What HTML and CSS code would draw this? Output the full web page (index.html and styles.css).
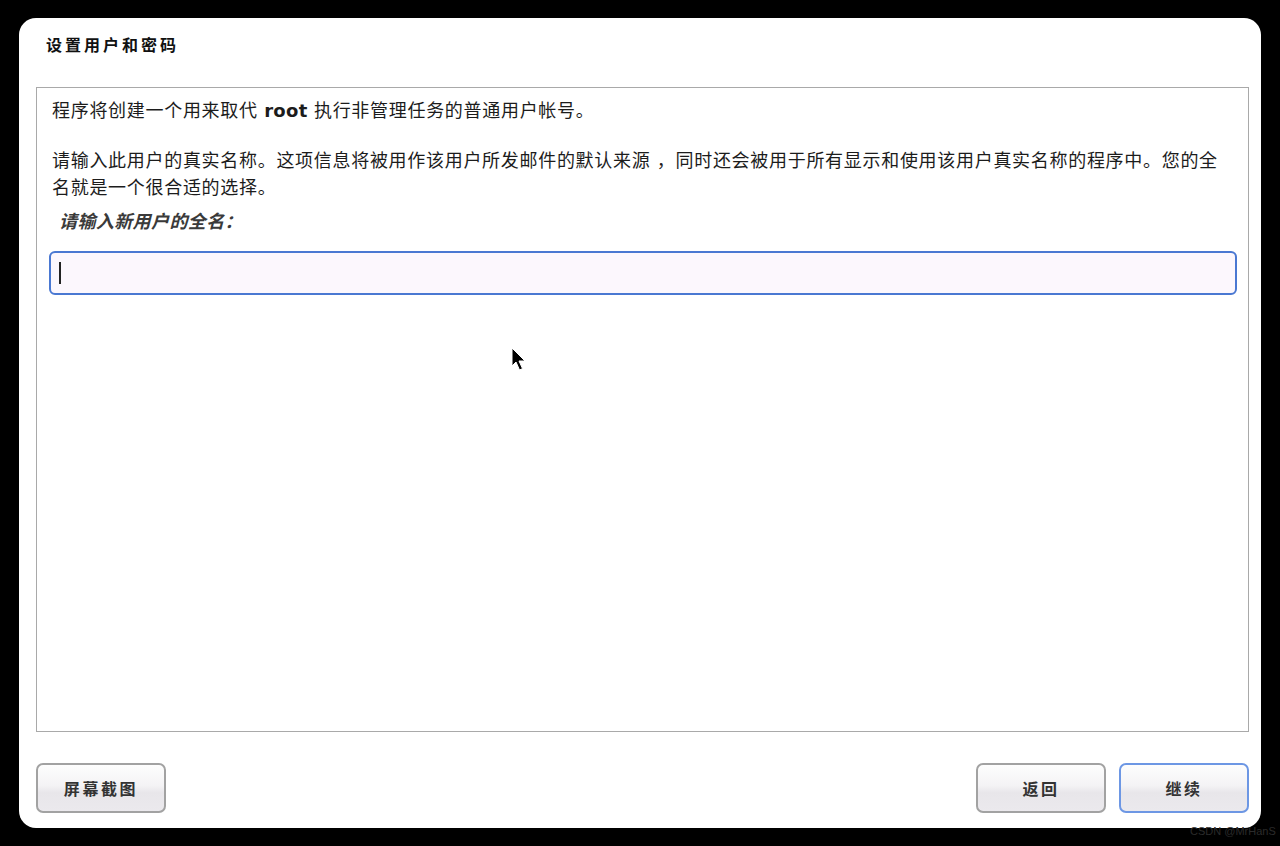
FILE: index.html
```html
<!DOCTYPE html>
<html lang="zh-CN">
<head>
<meta charset="utf-8">
<title>设置用户和密码</title>
<link rel="stylesheet" href="styles.css">
</head>
<body>
<div class="screen">
  <div class="panel">
    <div class="title">设置用户和密码</div>
    <div class="content">
      <p class="para">程序将创建一个用来取代 <b class="latin">root</b> 执行非管理任务的普通用户帐号。</p>
      <p class="para gap">请输入此用户的真实名称。这项信息将被用作该用户所发邮件的默认来源 ，同时还会被用于所有显示和使用该用户真实名称的程序中。您的全名就是一个很合适的选择。</p>
      <p class="label">请输入新用户的全名：</p>
      <div class="input"><span class="caret"></span></div>
    </div>
    <div class="buttons">
      <button class="btn">屏幕截图</button>
      <div class="spacer"></div>
      <button class="btn">返回</button>
      <button class="btn primary">继续</button>
    </div>
    <svg class="pointer" width="16" height="26" viewBox="0 0 16 26">
      <polygon points="1,1 1,19 5,15 8.5,23 11.5,21.6 8,14 14,14" fill="#000" stroke="#fff" stroke-width="1"/>
    </svg>
  </div>
  <div class="watermark">CSDN @MrHanS</div>
</div>
</body>
</html>
```
FILE: styles.css
```css
html, body {
  margin: 0;
  padding: 0;
  background: #000;
}
.screen {
  width: 1280px;
  height: 846px;
  background: #000;
  padding: 18px 19px 0 19px;
  box-sizing: border-box;
  position: relative;
  font-family: "DejaVu Sans", "Noto Sans CJK SC", sans-serif;
  color: #1c1c1c;
}
.panel {
  position: relative;
  width: 1242px;
  height: 810px;
  background: #fff;
  border-radius: 17px;
  display: flex;
  flex-direction: column;
  padding: 18px 12px 15px 17px;
  box-sizing: border-box;
}
.title {
  font-size: 16px;
  line-height: 20px;
  font-weight: bold;
  letter-spacing: 3px;
  padding-left: 10px;
  color: #111;
}
.content {
  margin-top: 31px;
  height: 645px;
  border: 1px solid #a9a9a9;
  box-sizing: border-box;
  padding: 9px 11px 0 12px;
  display: flex;
  flex-direction: column;
}
.para {
  margin: 0;
  padding: 0 9px 0 3px;
  font-size: 18px;
  line-height: 27px;
  letter-spacing: 0.7px;
}
.para.gap {
  margin-top: 23px;
}
.latin {
  font-weight: bold;
  letter-spacing: 0.3px;
}
.label {
  margin: 7px 0 0 0;
  padding-left: 10px;
  font-size: 18px;
  line-height: 27px;
  letter-spacing: 0.4px;
  font-style: italic;
  font-weight: bold;
  color: #3a3a3a;
}
.input {
  margin-top: 16px;
  height: 44px;
  border: 2px solid #4a78d2;
  border-radius: 6px;
  background: #fcf7fd;
  box-sizing: border-box;
  display: flex;
  align-items: center;
  padding-left: 8px;
}
.caret {
  width: 2px;
  height: 22px;
  background: #222;
}
.buttons {
  margin-top: 31px;
  display: flex;
  align-items: center;
  gap: 13px;
}
.spacer {
  flex: 1;
}
.btn {
  width: 130px;
  height: 50px;
  border: 2px solid #a2a2a2;
  border-radius: 7px;
  background: linear-gradient(#fdfdfd 0%, #f4f3f5 45%, #e8e6ea 60%, #ebe9ed 100%);
  font-family: "DejaVu Sans", "Noto Sans CJK SC", sans-serif;
  font-size: 16px;
  font-weight: bold;
  letter-spacing: 2.6px;
  color: #333;
  padding: 0;
  margin: 0;
}
.btn.primary {
  border-color: #6d97e4;
}
.pointer {
  position: absolute;
  left: 492px;
  top: 329px;
}
.watermark {
  position: absolute;
  left: 1190px;
  top: 825px;
  font-family: "Liberation Sans", sans-serif;
  font-size: 11px;
  color: #2b2b2b;
  white-space: nowrap;
}
```
